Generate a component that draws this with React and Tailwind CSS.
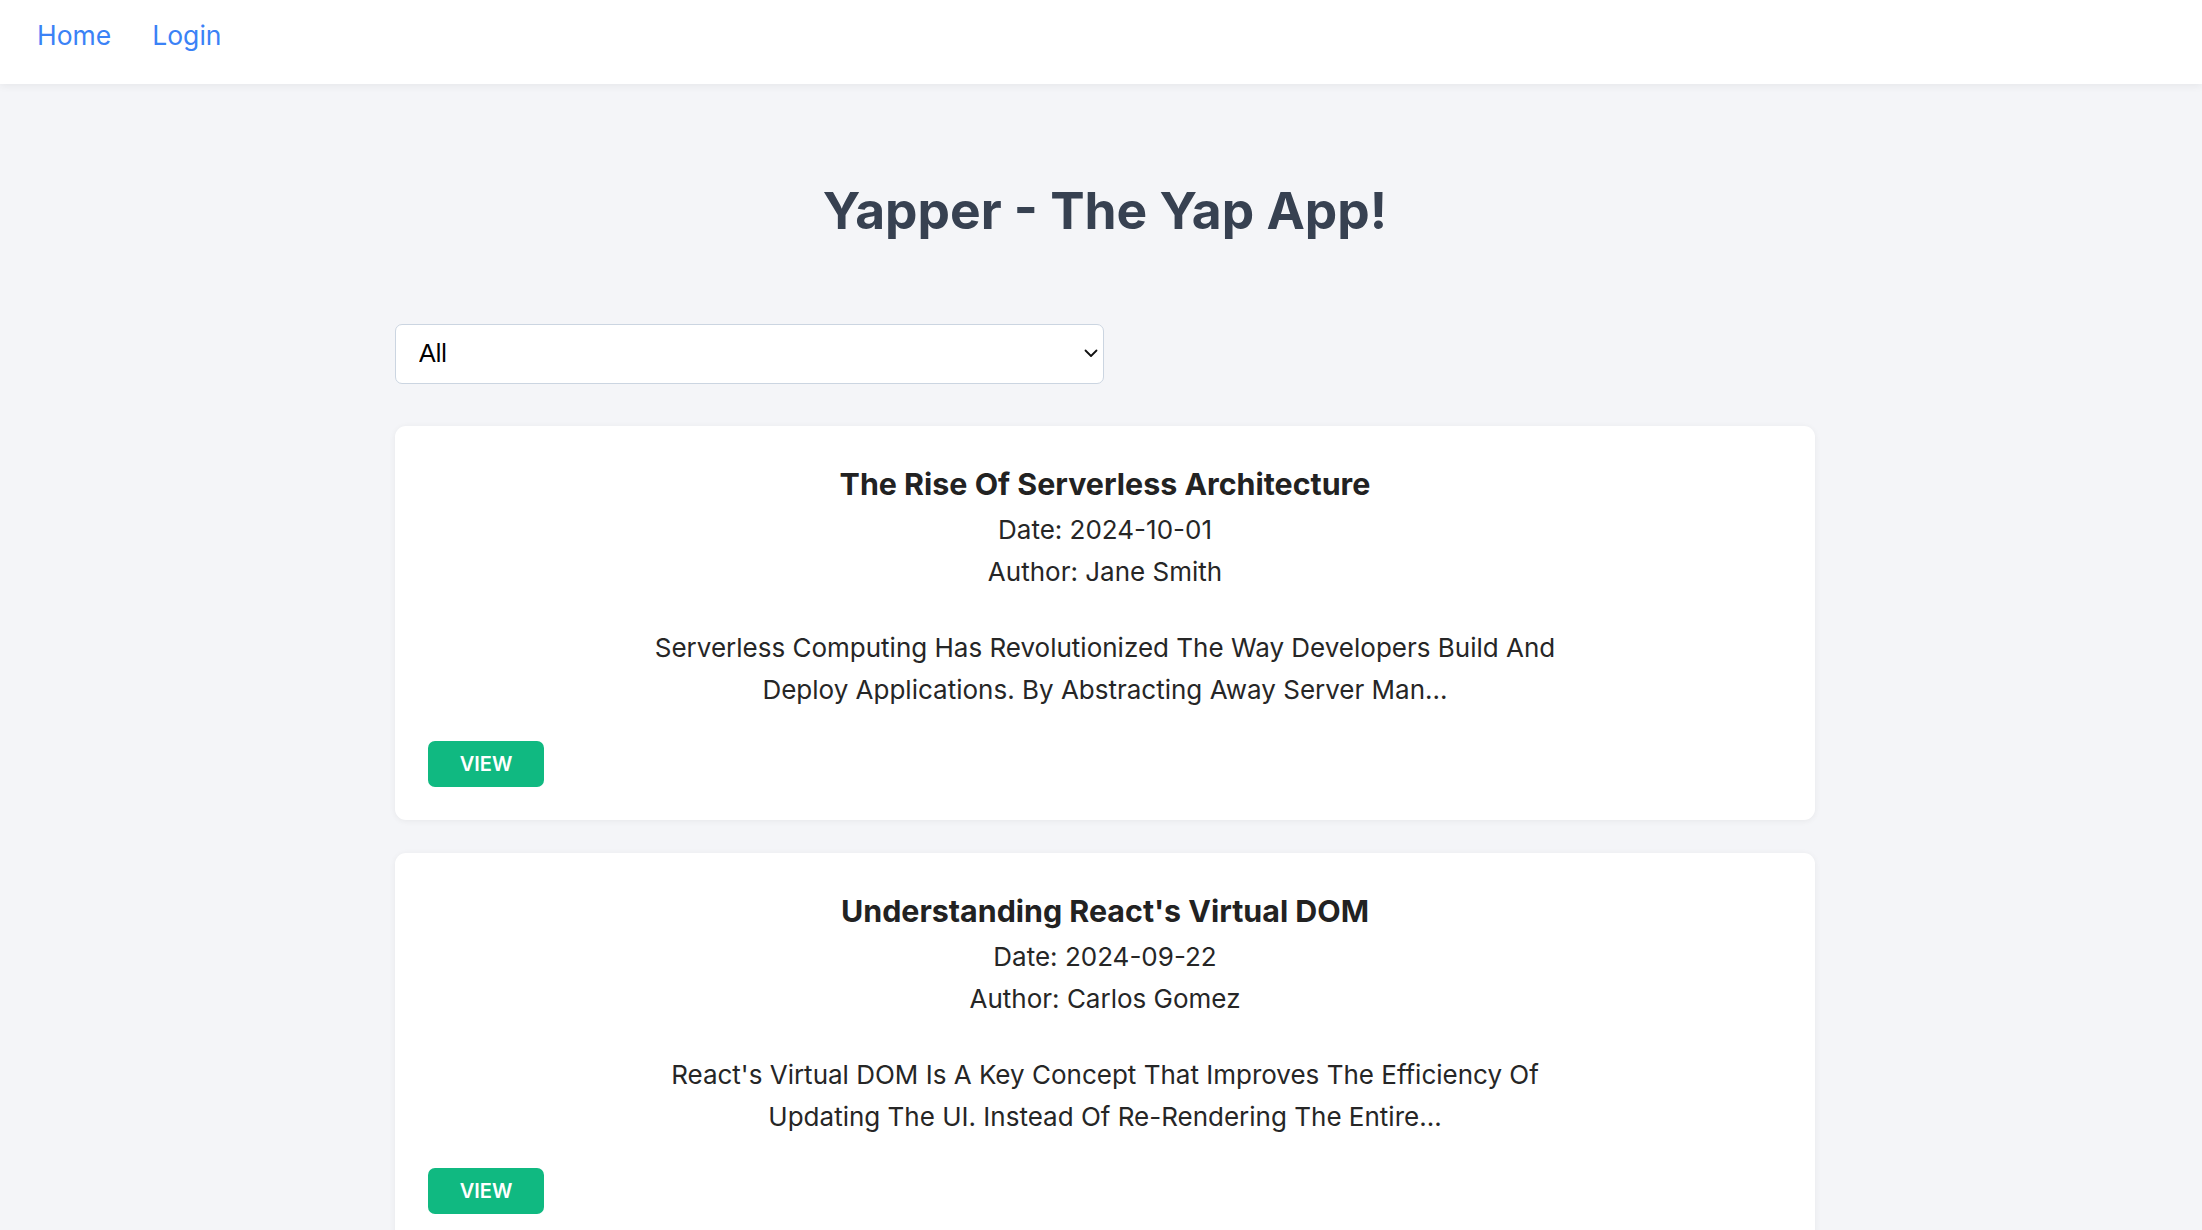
import { useState } from "react";

const posts = [
    {
        id: 1,
        title: "The Rise Of Serverless Architecture",
        date: "2024-10-01",
        author: "Jane Smith",
        excerpt:
            "Serverless Computing Has Revolutionized The Way Developers Build And Deploy Applications. By Abstracting Away Server Man...",
    },
    {
        id: 2,
        title: "Understanding React's Virtual DOM",
        date: "2024-09-22",
        author: "Carlos Gomez",
        excerpt:
            "React's Virtual DOM Is A Key Concept That Improves The Efficiency Of Updating The UI. Instead Of Re-Rendering The Entire...",
    },
];

function PostCard({ post }) {
    return (
        <div className="bg-white rounded-[11px] shadow-[0_1px_6px_rgba(0,0,0,0.06)] p-[33px] text-[#262626]">
            <h2 className="text-center font-bold text-[30.4px] leading-[50px] text-[#222]">{post.title}</h2>
            <p className="text-center text-[26px] leading-[42px]">Date: {post.date}</p>
            <p className="text-center text-[26px] leading-[42px]">Author: {post.author}</p>
            <p className="mt-[34px] mx-auto max-w-[941px] text-center text-[26px] leading-[42px]">{post.excerpt}</p>
            <button className="mt-[30px] w-[116px] h-[46px] rounded-[7px] bg-[#10b981] text-white text-[20px] font-semibold">
                VIEW
            </button>
        </div>
    );
}

export default function App() {
    const [filter, setFilter] = useState("All");

    return (
        <div className="min-h-screen bg-[#f4f5f8] font-['Inter',sans-serif]">
            {/* nav */}
            <nav className="h-[84px] bg-white shadow-[0_2px_8px_rgba(0,0,0,0.06)] pl-[37px] pt-[15px]">
                <div className="flex gap-[41px] text-[26.5px] leading-[40px] text-[#3b82f6]">
                    <a href="#">Home</a>
                    <a href="#">Login</a>
                </div>
            </nav>

            <div className="pl-[8px]">
                <main className="mx-auto w-[1420px] pb-10">
                    <h1 className="mt-[94px] text-center font-bold text-[51.5px] leading-[64px] text-[#374151]">
                        Yapper - The Yap App!
                    </h1>

                    <div className="relative mt-[82px] w-[709px]">
                        <select
                            value={filter}
                            onChange={(e) => setFilter(e.target.value)}
                            className="appearance-none w-full h-[60px] bg-white border border-[#cbd5e1] rounded-[7px] pl-[23px] pr-[30px] text-[25px] text-black font-['Liberation_Sans',Arial,sans-serif]"
                        >
                            <option>All</option>
                            <option>Tech</option>
                            <option>Lifestyle</option>
                        </select>
                        <svg
                            className="absolute right-[6px] top-[25px] pointer-events-none"
                            width="14"
                            height="9"
                            viewBox="0 0 14 9"
                            fill="none"
                        >
                            <path d="M1.5 1.5L7 7L12.5 1.5" stroke="#111" strokeWidth="1.8" strokeLinecap="round" strokeLinejoin="round" />
                        </svg>
                    </div>

                    <div className="mt-[42px] flex flex-col gap-[33px]">
                        {posts.map((post) => (
                            <PostCard key={post.id} post={post} />
                        ))}
                    </div>
                </main>
            </div>
        </div>
    );
}
